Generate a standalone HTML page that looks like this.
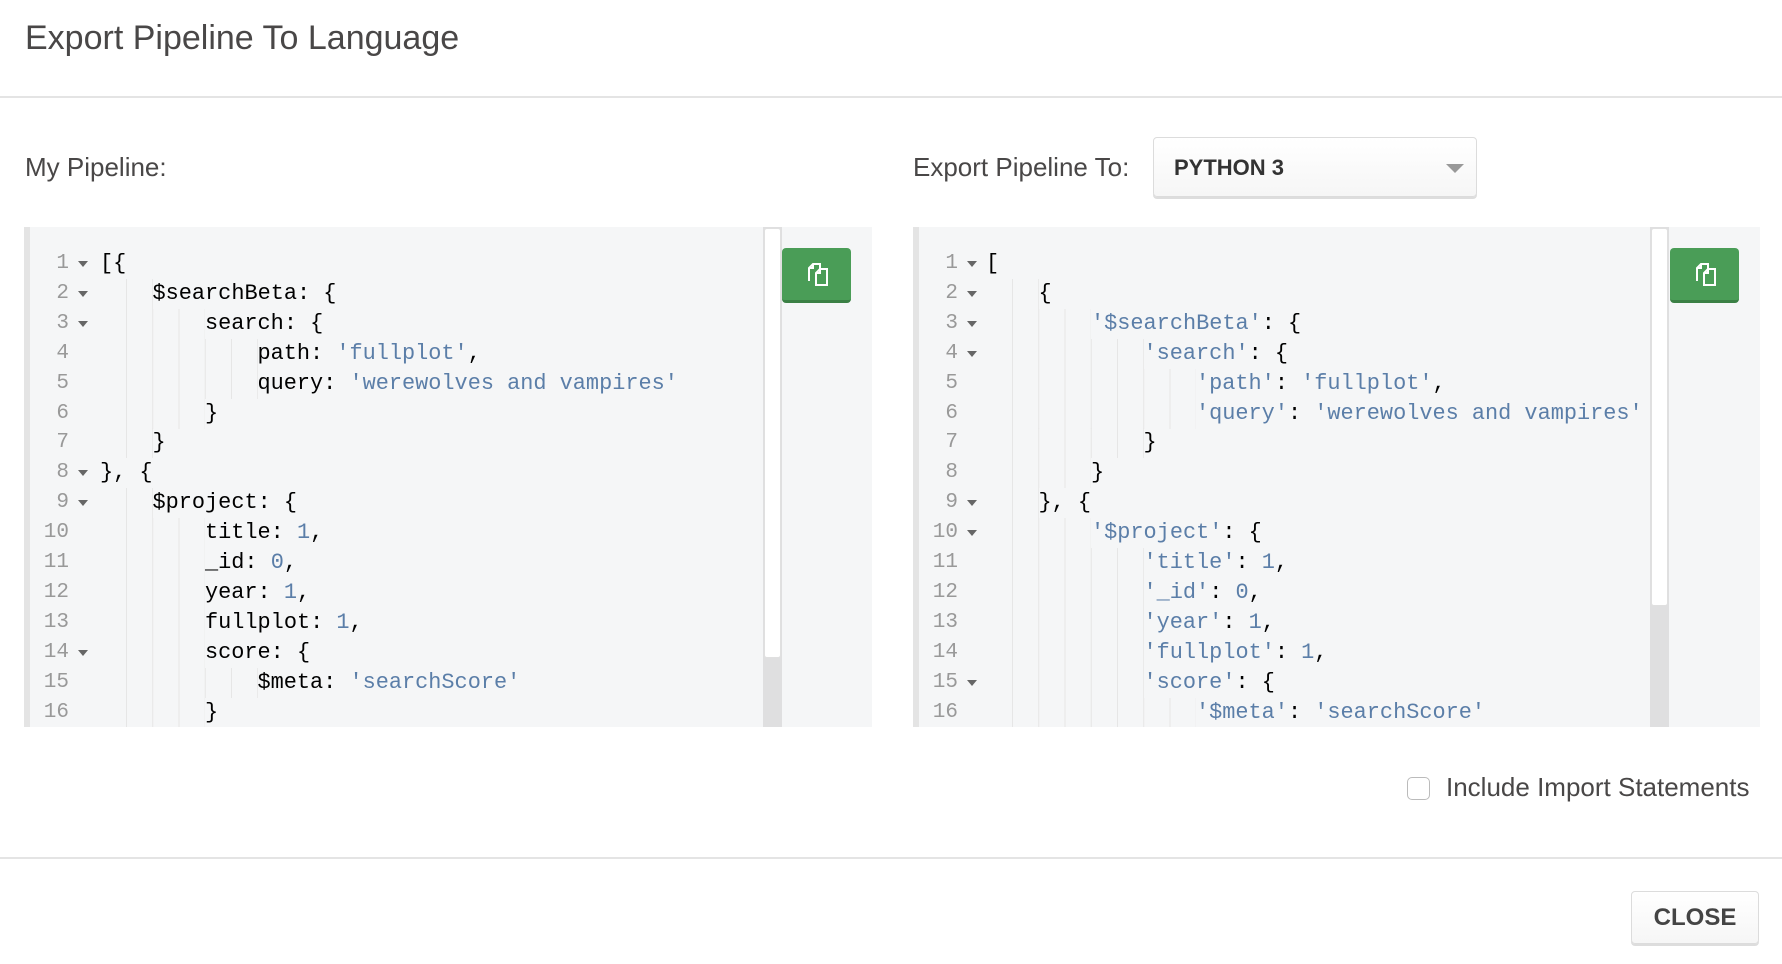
<!DOCTYPE html>
<html><head><meta charset="utf-8"><style>
*{margin:0;padding:0;box-sizing:border-box}
body{width:1782px;height:964px;background:#fff;position:relative;overflow:hidden;font-family:"Liberation Sans",sans-serif;color:#494747}
.abs{position:absolute}
.title{left:25px;top:19px;font-size:34px;color:#494747}
.hr{left:0;width:1782px;height:2px;background:#e4e4e4}
.lbl{font-size:26px;color:#494747}
.ed{background:#f5f6f7;overflow:hidden}
.ed .lb{position:absolute;left:0;top:0;width:6px;height:100%;background:#e4e4e4}
.ln{position:absolute;height:30px;line-height:30px;font-family:"Liberation Mono",monospace;font-size:21.9px;white-space:pre;color:#000}
.num{position:absolute;height:30px;line-height:30px;font-family:"Liberation Mono",monospace;font-size:21px;color:#999;text-align:right;width:40px}
.arr{position:absolute;width:0;height:0;border-left:5px solid transparent;border-right:5px solid transparent;border-top:6px solid #666}
.s{color:#5b7ea8}
.g{position:absolute;height:30px;background-image:linear-gradient(to right,#e6e6e6 1px,transparent 1px);background-size:26.25px 100%}
.sb{background:#dfdfe0}
.thumb{background:#fff;border:1px solid #e0e0e0;border-radius:3px}
.btn{background:#4a9d57;border-radius:4px;border-bottom:3px solid #3b8045}
.sel{border:1px solid #dcdcdc;border-radius:4px;background:linear-gradient(#fff,#f6f6f6);box-shadow:0 2px 0 #ddd}
</style></head><body>
<div class="abs title">Export Pipeline To Language</div>
<div class="abs hr" style="top:96px"></div>
<div class="abs lbl" style="left:25px;top:152px">My Pipeline:</div>
<div class="abs lbl" style="left:913px;top:152px">Export Pipeline To:</div>
<div class="abs sel" style="left:1153px;top:137px;width:324px;height:60px">
 <div class="abs" style="left:20px;top:17px;font-size:22px;font-weight:bold;color:#333">PYTHON 3</div>
 <div class="abs" style="left:292px;top:26px;width:0;height:0;border-left:9px solid transparent;border-right:9px solid transparent;border-top:9px solid #999"></div>
</div>

<div class="abs ed" style="left:24px;top:227px;width:848px;height:500px" id="L">
 <div class="lb"></div>
</div>
<div class="abs ed" style="left:913px;top:227px;width:847px;height:500px" id="R">
 <div class="lb"></div>
</div>

<div class="abs" style="left:1407px;top:777px;width:23px;height:23px;border:1.5px solid #bbb;border-radius:5px;background:#fff"></div>
<div class="abs lbl" style="left:1446px;top:772px">Include Import Statements</div>
<div class="abs hr" style="top:857px"></div>
<div class="abs sel" style="left:1631px;top:891px;width:128px;height:53px;text-align:center;line-height:52px;font-size:24px;font-weight:bold;color:#444">CLOSE</div>

<script>
function build(id,lines,opt){
 var e=document.getElementById(id),h='';
 lines.forEach(function(l,i){
  var top=22+i*29.9;
  h+='<div class="num" style="left:'+(opt.numR-40)+'px;top:'+top+'px">'+(i+1)+'</div>';
  if(l[0])h+='<div class="arr" style="left:'+opt.arr+'px;top:'+(top+12)+'px"></div>';
  var ind=l[1]*52.5;
  if(ind>0)h+='<div class="g" style="left:'+(opt.code+26)+'px;top:'+top+'px;width:'+(ind-26)+'px"></div>';
  h+='<div class="ln" style="left:'+(opt.code+ind)+'px;top:'+top+'px">'+l[2]+'</div>';
 });
 h+='<div class="abs sb" style="left:'+opt.sb+'px;top:0;width:19px;height:500px"></div>';
 h+='<div class="abs thumb" style="left:'+(opt.sb+1)+'px;top:1px;width:17px;height:'+opt.th+'px"></div>';
 h+='<div class="abs" style="left:'+(opt.sb+19)+'px;top:0;width:100px;height:500px;background:#f5f6f7"></div>';
 h+='<div class="abs btn" style="left:'+opt.btn+'px;top:21px;width:69px;height:55px"><svg width="69" height="52" viewBox="0 0 69 52"><g fill="none" stroke="#fff" stroke-width="2"><path d="M27 33V20l4-4h7v5"/><path d="M34 37V25l4-4h7v16z"/><path d="M31 16v4h-4M38 21v4h-4"/></g></svg></div>';
 e.innerHTML+=h;
}
var S=function(t){return '<span class="s">'+t+'</span>'};
build('L',[
 [1,0,'[{'],[1,1,'$searchBeta: {'],[1,2,'search: {'],[0,3,'path: '+S("'fullplot'")+','],
 [0,3,'query: '+S("'werewolves and vampires'")],[0,2,'}'],[0,1,'}'],[1,0,'}, {'],
 [1,1,'$project: {'],[0,2,'title: '+S('1')+','],[0,2,'_id: '+S('0')+','],[0,2,'year: '+S('1')+','],
 [0,2,'fullplot: '+S('1')+','],[1,2,'score: {'],[0,3,'$meta: '+S("'searchScore'")],[0,2,'}']
],{numR:45,arr:54,code:76,sb:739,th:430,btn:758});
build('R',[
 [1,0,'['],[1,1,'{'],[1,2,S("'$searchBeta'")+': {'],[1,3,S("'search'")+': {'],
 [0,4,S("'path'")+': '+S("'fullplot'")+','],[0,4,S("'query'")+': '+S("'werewolves and vampires'")],
 [0,3,'}'],[0,2,'}'],[1,1,'}, {'],[1,2,S("'$project'")+': {'],[0,3,S("'title'")+': '+S('1')+','],
 [0,3,S("'_id'")+': '+S('0')+','],[0,3,S("'year'")+': '+S('1')+','],[0,3,S("'fullplot'")+': '+S('1')+','],
 [1,3,S("'score'")+': {'],[0,4,S("'$meta'")+': '+S("'searchScore'")]
],{numR:45,arr:54,code:73,sb:737,th:378,btn:757});
</script>
</body></html>
